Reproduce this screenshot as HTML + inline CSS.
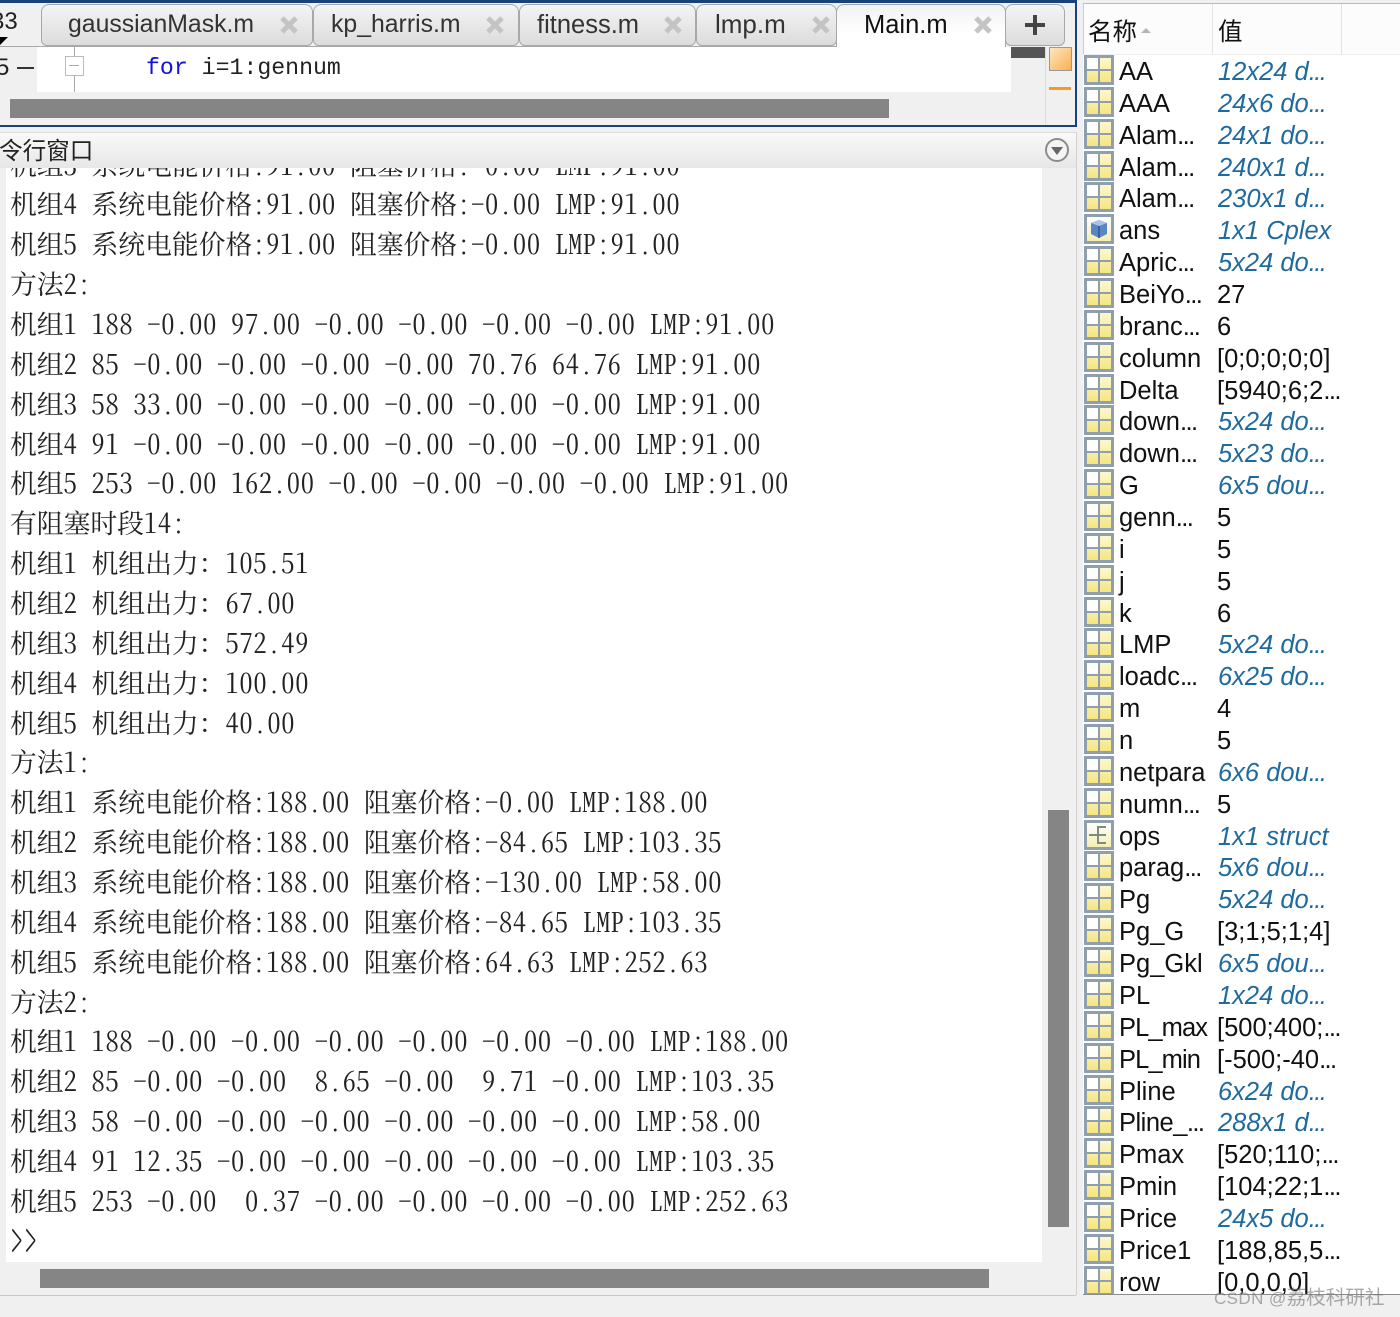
<!DOCTYPE html>
<html lang="zh"><head><meta charset="utf-8"><style>
html,body{margin:0;padding:0}
body{width:1400px;height:1317px;position:relative;overflow:hidden;background:#f0f0f0;font-family:"Liberation Sans","Noto Sans CJK SC",sans-serif;color:#111}
.a{position:absolute}
.tab{position:absolute;top:4px;height:42px;box-sizing:border-box;border:1px solid #a8a8a8;border-bottom:1px solid #a8a8a8;border-radius:8px 8px 6px 6px;background:linear-gradient(#f4f4f4,#dcdcdc);font-size:24.8px;line-height:40px;color:#333;white-space:nowrap}
.tab span{position:absolute;top:0}
.x{position:absolute;top:10px;width:20px;height:20px}
#con{position:absolute;left:6px;top:168px;width:1036px;height:1094px;background:#fff;overflow:hidden;font:26.5px/39.87px "Noto Serif CJK SC",serif;font-feature-settings:"hwid";letter-spacing:.7px;color:#222}
#con div{margin-left:4px;height:39.87px;line-height:39.87px;white-space:pre;overflow:visible}
#con div:first-child{margin-top:-24.5px}
#con i{font:26.8px/39.87px "Noto Serif CJK SC","Noto Sans CJK SC",serif;font-style:normal;font-feature-settings:normal;letter-spacing:0;color:#222}
#vars{position:absolute;left:1083px;top:55px;width:317px;height:1239px;background:#fff;overflow:hidden;font-size:25.5px;color:#111}
.r{position:relative;height:31.87px;line-height:32px;white-space:nowrap}
.r b{position:absolute;left:1px;top:0;width:30px;height:30px;box-sizing:border-box;border:3px solid #8f9fae;background:linear-gradient(#8f9fae,#8f9fae) center/100% 2px no-repeat,linear-gradient(#8f9fae,#8f9fae) center/2px 100% no-repeat,linear-gradient(to right,#fff 0 50%,rgba(255,255,255,0) 50%) 0 0/100% 50% no-repeat,linear-gradient(#fdf8cf,#f6e57f)}
.r u{position:absolute;left:36px;top:1px;text-decoration:none}
.r em{position:absolute;left:135px;top:1px;color:#1f6a9e}
.r s{position:absolute;left:134px;top:1px;text-decoration:none}
.r a{letter-spacing:-1.6px}
</style></head><body>
<div class="a" style="left:0;top:0;width:1077px;height:3px;background:#17427a"></div>
<div class="a" style="left:1075px;top:0;width:2px;height:127px;background:#17427a"></div>
<div class="a" style="left:0;top:3px;width:1075px;height:44px;background:#f0f0f0"></div>
<div class="a" style="left:-9px;top:8px;font-size:24px;line-height:28px;color:#222">33</div>
<div class="a" style="left:-8px;top:37px;width:0;height:0;border-left:8px solid transparent;border-right:8px solid transparent;border-top:8px solid #000"></div>

<div class="tab" style="left:41px;width:272px"><span style="left:26px">gaussianMask.m</span><svg class="x" style="left:237px" viewBox="0 0 20 20"><path d="M3 3L17 17M17 3L3 17" stroke="#c4c4c4" stroke-width="5"/></svg></div>
<div class="tab" style="left:313px;width:206px"><span style="left:17px">kp_harris.m</span><svg class="x" style="left:171px" viewBox="0 0 20 20"><path d="M3 3L17 17M17 3L3 17" stroke="#c4c4c4" stroke-width="5"/></svg></div>
<div class="tab" style="left:519px;width:177px"><span style="left:17px;font-size:25.5px">fitness.m</span><svg class="x" style="left:143px" viewBox="0 0 20 20"><path d="M3 3L17 17M17 3L3 17" stroke="#c4c4c4" stroke-width="5"/></svg></div>
<div class="tab" style="left:696px;width:141px"><span style="left:18px;top:-1px;font-size:26px">lmp.m</span><svg class="x" style="left:114px" viewBox="0 0 20 20"><path d="M3 3L17 17M17 3L3 17" stroke="#c4c4c4" stroke-width="5"/></svg></div>
<div class="tab" style="left:1005px;width:60px;height:42px"><svg class="a" style="left:18px;top:9px" width="22" height="22" viewBox="0 0 22 22"><path d="M1 11H21M11 1V21" stroke="#444" stroke-width="4"/></svg></div>
<div class="a" style="left:0;top:46px;width:836px;height:1px;background:#a8a8a8"></div>
<div class="tab" style="left:836px;width:170px;height:44px;border-bottom:0;border-radius:8px 8px 0 0;background:linear-gradient(#f2f2f2 0,#fff 30px);color:#111"><span style="left:27px;font-size:25.5px">Main.m</span><svg class="x" style="left:136px" viewBox="0 0 20 20"><path d="M3 3L17 17M17 3L3 17" stroke="#c4c4c4" stroke-width="5"/></svg></div>

<!-- editor -->
<div class="a" style="left:0;top:47px;width:1011px;height:45px;background:#fff"></div>
<div class="a" style="left:0;top:47px;width:37px;height:45px;background:#f0f0f0;border-right:1px solid #fff"></div>
<div class="a" style="left:0;top:54px;font-size:24px;line-height:28px;color:#222;margin-left:-4px">5</div>
<div class="a" style="left:17px;top:67px;width:17px;height:1.5px;background:#333"></div>
<div class="a" style="left:74px;top:47px;width:1px;height:45px;background:#aaa"></div>
<div class="a" style="left:65px;top:56px;width:17px;height:18px;border:1px solid #bbb;background:#fff"></div>
<div class="a" style="left:69px;top:65px;width:10px;height:1px;background:#aaa"></div>
<div class="a" style="left:146px;top:51px;font:23.2px/34px 'Liberation Mono',monospace;color:#222;white-space:pre"><span style="color:#1010e0">for</span> i=1:gennum</div>
<div class="a" style="left:1011px;top:47px;width:34px;height:11px;background:#555"></div>
<div class="a" style="left:1045px;top:47px;width:1px;height:78px;background:#dcdcdc"></div>
<div class="a" style="left:1049px;top:47px;width:23px;height:24px;box-sizing:border-box;border:1px solid #999;background:linear-gradient(135deg,#fde6c2,#fbb04e)"></div>
<div class="a" style="left:1049px;top:87px;width:22px;height:3px;background:#f59a1e"></div>
<div class="a" style="left:10px;top:99px;width:879px;height:19px;background:#858585"></div>
<div class="a" style="left:0;top:125px;width:1077px;height:2px;background:#17427a"></div>

<!-- command window -->
<div class="a" style="left:0;top:132px;width:1076px;height:36px;background:linear-gradient(#f9f9f9,#e7e7e7);border-top:1px solid #ddd;box-sizing:border-box"></div>
<div class="a" style="left:-1px;top:134px;font:23.6px/30px 'Noto Sans CJK SC',sans-serif;color:#222;white-space:nowrap">令行窗口</div>
<svg class="a" style="left:1044px;top:137px" width="26" height="26" viewBox="0 0 26 26"><circle cx="13" cy="13" r="11" fill="#f4f4f4" stroke="#8c8c8c" stroke-width="2"/><path d="M7 10H19L13 18Z" fill="#666"/></svg>

<div id="con">
<div><i>机组</i>3 <i>系统电能价格</i>:91.00 <i>阻塞价格</i>:-0.00 LMP:91.00</div>
<div><i>机组</i>4 <i>系统电能价格</i>:91.00 <i>阻塞价格</i>:-0.00 LMP:91.00</div>
<div><i>机组</i>5 <i>系统电能价格</i>:91.00 <i>阻塞价格</i>:-0.00 LMP:91.00</div>
<div><i>方法</i>2:</div>
<div><i>机组</i>1 188 -0.00 97.00 -0.00 -0.00 -0.00 -0.00 LMP:91.00</div>
<div><i>机组</i>2 85 -0.00 -0.00 -0.00 -0.00 70.76 64.76 LMP:91.00</div>
<div><i>机组</i>3 58 33.00 -0.00 -0.00 -0.00 -0.00 -0.00 LMP:91.00</div>
<div><i>机组</i>4 91 -0.00 -0.00 -0.00 -0.00 -0.00 -0.00 LMP:91.00</div>
<div><i>机组</i>5 253 -0.00 162.00 -0.00 -0.00 -0.00 -0.00 LMP:91.00</div>
<div><i>有阻塞时段</i>14:</div>
<div><i>机组</i>1 <i>机组出力：</i>105.51</div>
<div><i>机组</i>2 <i>机组出力：</i>67.00</div>
<div><i>机组</i>3 <i>机组出力：</i>572.49</div>
<div><i>机组</i>4 <i>机组出力：</i>100.00</div>
<div><i>机组</i>5 <i>机组出力：</i>40.00</div>
<div><i>方法</i>1:</div>
<div><i>机组</i>1 <i>系统电能价格</i>:188.00 <i>阻塞价格</i>:-0.00 LMP:188.00</div>
<div><i>机组</i>2 <i>系统电能价格</i>:188.00 <i>阻塞价格</i>:-84.65 LMP:103.35</div>
<div><i>机组</i>3 <i>系统电能价格</i>:188.00 <i>阻塞价格</i>:-130.00 LMP:58.00</div>
<div><i>机组</i>4 <i>系统电能价格</i>:188.00 <i>阻塞价格</i>:-84.65 LMP:103.35</div>
<div><i>机组</i>5 <i>系统电能价格</i>:188.00 <i>阻塞价格</i>:64.63 LMP:252.63</div>
<div><i>方法</i>2:</div>
<div><i>机组</i>1 188 -0.00 -0.00 -0.00 -0.00 -0.00 -0.00 LMP:188.00</div>
<div><i>机组</i>2 85 -0.00 -0.00  8.65 -0.00  9.71 -0.00 LMP:103.35</div>
<div><i>机组</i>3 58 -0.00 -0.00 -0.00 -0.00 -0.00 -0.00 LMP:58.00</div>
<div><i>机组</i>4 91 12.35 -0.00 -0.00 -0.00 -0.00 -0.00 LMP:103.35</div>
<div><i>机组</i>5 253 -0.00  0.37 -0.00 -0.00 -0.00 -0.00 LMP:252.63</div>
<div><span style="display:inline-block;transform:scale(1,1.9);transform-origin:50% 55%;font-weight:200">&gt;&gt;</span></div>
</div>
<div class="a" style="left:-9px;top:1228px;font:bold 20px/20px 'Liberation Mono',monospace;color:#222">:</div>
<div class="a" style="left:1048px;top:810px;width:21px;height:417px;background:#858585"></div>
<div class="a" style="left:40px;top:1269px;width:949px;height:19px;background:#858585"></div>
<div class="a" style="left:0;top:1295px;width:1076px;height:1px;background:#c8c8c8"></div>
<div class="a" style="left:1076px;top:132px;width:1px;height:1163px;background:#d0d0d0"></div>

<!-- workspace -->
<div class="a" style="left:1083px;top:3px;width:317px;height:51px;background:#fcfcfc;border-top:1px solid #bbb;border-left:1px solid #ccc;box-sizing:border-box"></div>
<div class="a" style="left:1083px;top:54px;width:317px;height:1px;background:#eee"></div>
<div class="a" style="left:1212px;top:4px;width:1px;height:50px;background:#e4e4e4"></div>
<div class="a" style="left:1341px;top:4px;width:1px;height:50px;background:#e4e4e4"></div>
<div class="a" style="left:1088px;top:14px;font:24.5px/34px 'Noto Sans CJK SC',sans-serif;color:#111">名称</div>
<div class="a" style="left:1141px;top:28px;width:0;height:0;border-left:5px solid transparent;border-right:5px solid transparent;border-bottom:5px solid #b5b5b5"></div>
<div class="a" style="left:1218px;top:14px;font:24.5px/34px 'Noto Sans CJK SC',sans-serif;color:#111">值</div>
<div class="a" style="left:1083px;top:55px;width:1px;height:1239px;background:#ccc"></div>
<div id="vars">
<div class="r"><b></b><u>AA</u><em>12x24 d<a>...</a></em></div>
<div class="r"><b></b><u>AAA</u><em>24x6 do<a>...</a></em></div>
<div class="r"><b></b><u>Alam<a>...</a></u><em>24x1 do<a>...</a></em></div>
<div class="r"><b></b><u>Alam<a>...</a></u><em>240x1 d<a>...</a></em></div>
<div class="r"><b></b><u>Alam<a>...</a></u><em>230x1 d<a>...</a></em></div>
<div class="r"><b style="background:linear-gradient(#fff,#f5eeb0)"><svg style="position:absolute;left:2px;top:2px" width="20" height="20" viewBox="0 0 20 20"><path d="M10 1L18 4V15L10 19L2 15V4Z" fill="#5a86c4"/><path d="M2 4L10 7L18 4L10 1Z" fill="#a9c3e6"/><path d="M10 7V19" stroke="#2f5590" stroke-width="1.5"/></svg></b><u>ans</u><em>1x1 Cplex</em></div>
<div class="r"><b></b><u>Apric<a>...</a></u><em>5x24 do<a>...</a></em></div>
<div class="r"><b></b><u>BeiYo<a>...</a></u><s>27</s></div>
<div class="r"><b></b><u>branc<a>...</a></u><s>6</s></div>
<div class="r"><b></b><u>column</u><s>[0;0;0;0;0]</s></div>
<div class="r"><b></b><u>Delta</u><s>[5940;6;2<a>...</a></s></div>
<div class="r"><b></b><u>down<a>...</a></u><em>5x24 do<a>...</a></em></div>
<div class="r"><b></b><u>down<a>...</a></u><em>5x23 do<a>...</a></em></div>
<div class="r"><b></b><u>G</u><em>6x5 dou<a>...</a></em></div>
<div class="r"><b></b><u>genn<a>...</a></u><s>5</s></div>
<div class="r"><b></b><u>i</u><s>5</s></div>
<div class="r"><b></b><u>j</u><s>5</s></div>
<div class="r"><b></b><u>k</u><s>6</s></div>
<div class="r"><b></b><u>LMP</u><em>5x24 do<a>...</a></em></div>
<div class="r"><b></b><u>loadc<a>...</a></u><em>6x25 do<a>...</a></em></div>
<div class="r"><b></b><u>m</u><s>4</s></div>
<div class="r"><b></b><u>n</u><s>5</s></div>
<div class="r"><b></b><u>netpara</u><em>6x6 dou<a>...</a></em></div>
<div class="r"><b></b><u>numn<a>...</a></u><s>5</s></div>
<div class="r"><b style="background:linear-gradient(#fff,#f5eeb0)"><svg style="position:absolute;left:1px;top:1px" width="22" height="22" viewBox="0 0 22 22"><path d="M1 11H9M18 3H10V19H18M10 11H18" fill="none" stroke="#7d8b84" stroke-width="2"/></svg></b><u>ops</u><em>1x1 struct</em></div>
<div class="r"><b></b><u>parag<a>...</a></u><em>5x6 dou<a>...</a></em></div>
<div class="r"><b></b><u>Pg</u><em>5x24 do<a>...</a></em></div>
<div class="r"><b></b><u>Pg_G</u><s>[3;1;5;1;4]</s></div>
<div class="r"><b></b><u>Pg_Gkl</u><em>6x5 dou<a>...</a></em></div>
<div class="r"><b></b><u>PL</u><em>1x24 do<a>...</a></em></div>
<div class="r"><b></b><u style="letter-spacing:-.9px">PL_max</u><s>[500;400;<a>...</a></s></div>
<div class="r"><b></b><u style="letter-spacing:-.9px">PL_min</u><s>[-500;-40<a>...</a></s></div>
<div class="r"><b></b><u>Pline</u><em>6x24 do<a>...</a></em></div>
<div class="r"><b></b><u style="letter-spacing:-.5px">Pline_<a>...</a></u><em>288x1 d<a>...</a></em></div>
<div class="r"><b></b><u>Pmax</u><s>[520;110;<a>...</a></s></div>
<div class="r"><b></b><u>Pmin</u><s>[104;22;1<a>...</a></s></div>
<div class="r"><b></b><u>Price</u><em>24x5 do<a>...</a></em></div>
<div class="r"><b></b><u>Price1</u><s>[188,85,5<a>...</a></s></div>
<div class="r"><b></b><u>row</u><s>[0,0,0,0]</s></div>
</div>
<div class="a" style="left:1083px;top:1294px;width:317px;height:1px;background:#8c8c8c"></div>
<div class="a" style="left:1214px;top:1285px;font:19.6px/26px 'Liberation Sans','Noto Sans CJK SC',sans-serif;color:rgba(120,120,120,.62);white-space:nowrap"><span style="font-size:17px;letter-spacing:.4px">CSDN @</span>荔枝科研社</div>
</body></html>
